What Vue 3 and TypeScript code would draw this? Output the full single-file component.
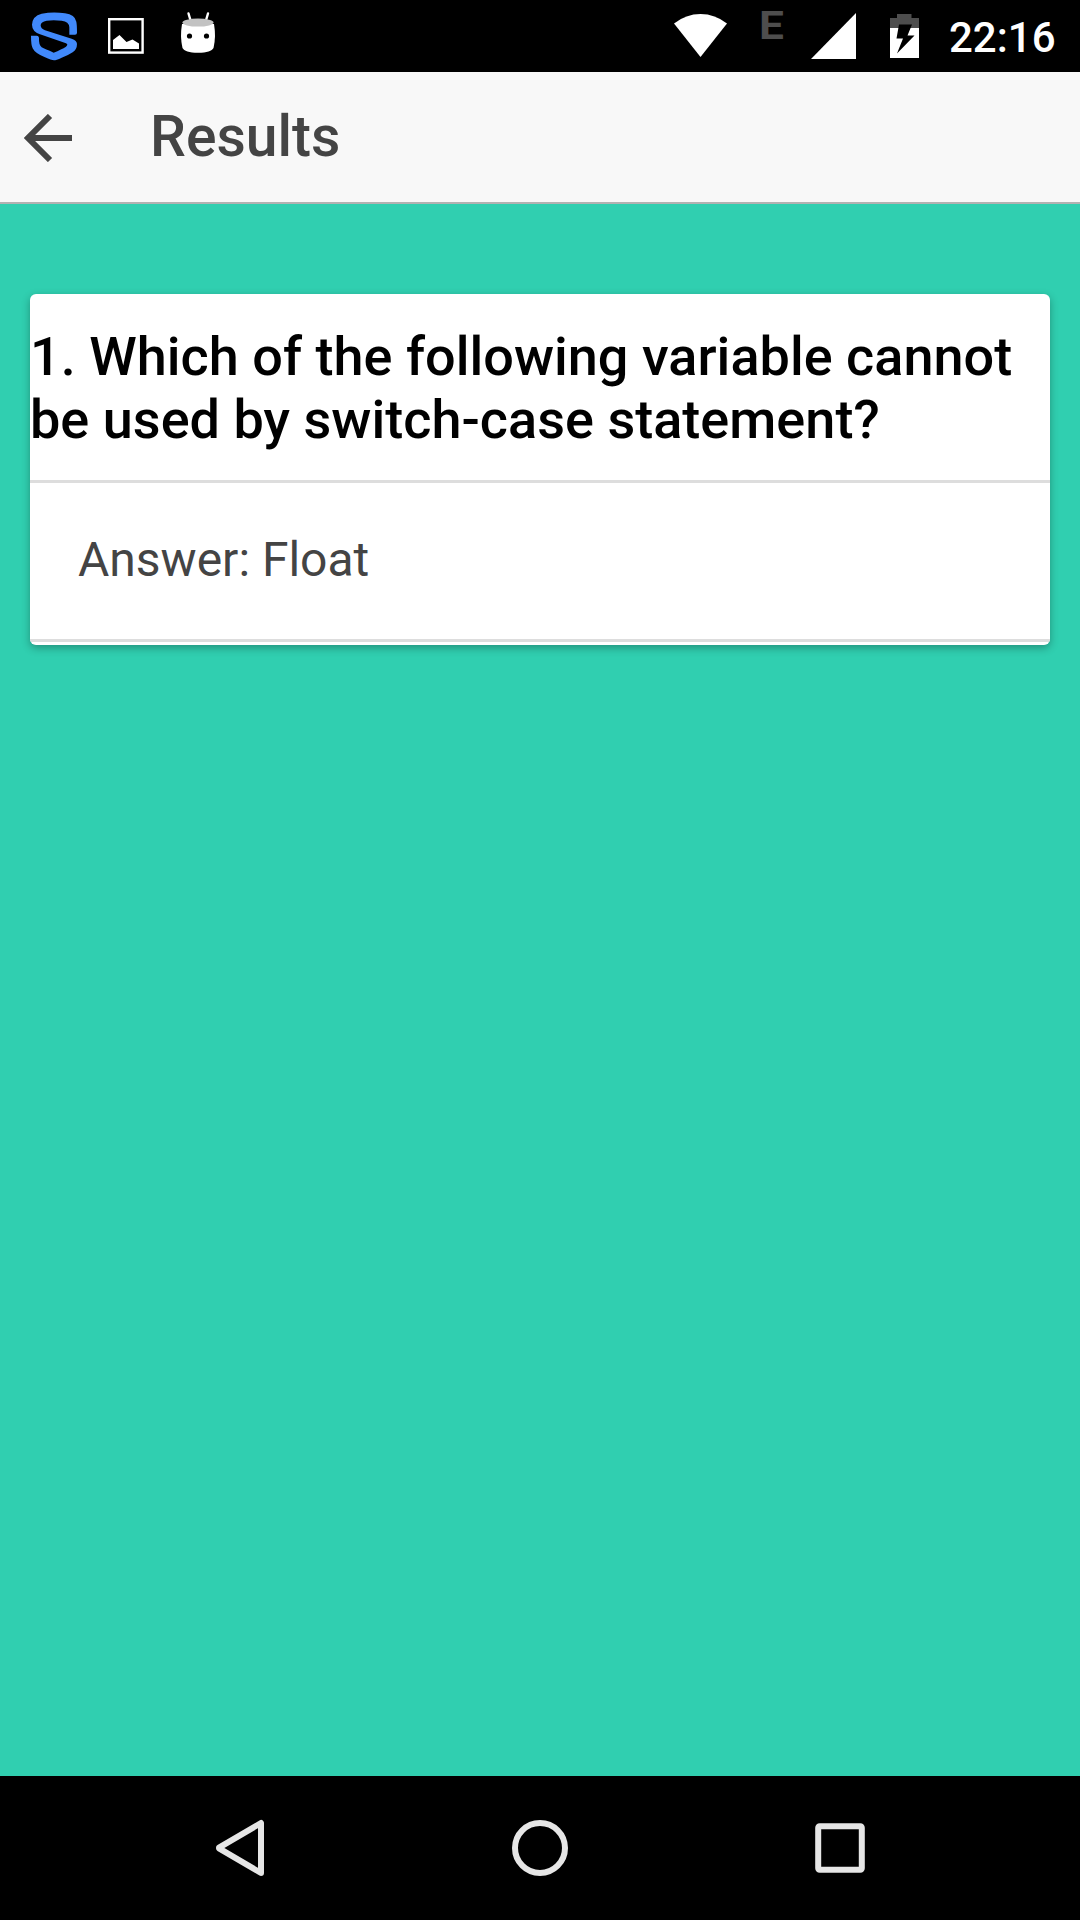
<script setup lang="ts">
interface Result {
  question: string
  answer: string
}

const title = 'Results'
const results: Result[] = [
  {
    question: 'Which of the following variable cannot be used by switch-case statement?',
    answer: 'Float',
  },
]
</script>

<template>
  <div class="screen">
    <div class="status">
      <div class="notifications">
        <svg class="shield" width="48" height="50" viewBox="30 33 144 150">
          <path
            fill="#4189fb"
            d="M148 104V82Q147 64 125 62Q100 59 80 62Q62 65 62 76Q62 86 75 91L155 116Q171 121 171 132Q171 148 158 157Q145 166 125 173Q108 181 102 181Q94 181 75 172Q45 160 38 145Q33 135 33 107H50Q57 107 57 115Q56 135 65 142Q75 147 101 158Q125 148 138 140Q146 134 138 130L60 103Q36 94 36 74Q37 48 65 41Q100 34 135 40Q165 44 169 65Q171 75 171 98Q171 104 165 104Z"
          />
        </svg>
        <svg class="photo" width="36" height="36" viewBox="0 0 36 36">
          <rect x="1.200" y="1.200" width="33.400" height="33.400" fill="none" stroke="#fff" stroke-width="2.400" />
          <path d="M5 31V22L11.500 17L18.500 24L24.500 21.500L31 25.500V31Z" fill="#fff" />
        </svg>
        <svg class="droid" width="36" height="42" viewBox="0 0 36 42">
          <path d="M8.500 1.500L11 10M28 1.500L25.500 10" stroke="#fff" stroke-width="2.400" stroke-linecap="round" />
          <path d="M2 12C0.600 20 0.600 28 2.500 36C4 39 9 40.800 18 40.800S32 39 33.500 36C35.400 28 35.400 20 34 12Z" fill="#fff" />
          <ellipse cx="18" cy="10.600" rx="15.600" ry="4" fill="#c2c2c2" />
          <circle cx="9.500" cy="24" r="2.600" fill="#000" />
          <circle cx="26.500" cy="24" r="2.600" fill="#000" />
        </svg>
      </div>
      <div class="system">
        <svg class="wifi" width="54" height="44" viewBox="0 0 54 44">
          <path d="M0 9.500Q12 0 26.500 0T53 9.500L26.500 43Z" fill="#fff" />
        </svg>
        <span class="network">E</span>
        <svg class="signal" width="45" height="46" viewBox="0 0 45 46">
          <path d="M45 0V46H0Z" fill="#fff" />
        </svg>
        <svg class="battery" width="29" height="44" viewBox="0 0 29 44">
          <path d="M7 0H21.500V4H29V14H0V4H7Z" fill="#4d4d4d" />
          <path d="M0 14H29V44H0Z" fill="#fff" />
          <path d="M9 10.500H22L17.500 21.500H24.500L7 39.500L13 24.500H6.500Z" fill="#000" />
        </svg>
        <span class="clock">22:16</span>
      </div>
    </div>

    <header class="bar">
      <svg class="back" width="48" height="48" viewBox="0 0 48 48" fill="none" stroke="#444" stroke-width="6">
        <path d="M48 24H4M26 2L4 24L26 46" />
      </svg>
      <h1 class="title">{{ title }}</h1>
    </header>

    <main class="content">
      <section v-for="(result, index) in results" :key="index" class="card">
        <h4 class="question">{{ index + 1 }}. {{ result.question }}</h4>
        <p class="answer">Answer: {{ result.answer }}</p>
      </section>
    </main>

    <nav class="nav">
      <svg width="56" height="60" viewBox="0 0 56 60" fill="none" stroke="#e6e6e6" stroke-width="6" stroke-linejoin="round">
        <path d="M49 5V55L7 30.300V29.700Z" />
      </svg>
      <svg width="56" height="56" viewBox="0 0 56 56" fill="none" stroke="#e6e6e6" stroke-width="6">
        <circle cx="28" cy="28" r="25" />
      </svg>
      <svg width="56" height="50" viewBox="0 0 56 50" fill="none" stroke="#e6e6e6" stroke-width="6">
        <rect x="6.200" y="3.200" width="43.600" height="43.600" rx="1.500" />
      </svg>
    </nav>
  </div>
</template>

<style>
body {
  margin: 0;
}
</style>

<style scoped>
.screen {
  display: flex;
  flex-direction: column;
  width: 1080px;
  height: 1920px;
  overflow: hidden;
  background: #30cfb0;
  font-family: Roboto, sans-serif;
}

svg {
  display: block;
  flex: none;
}

.status {
  display: flex;
  justify-content: space-between;
  height: 72px;
  background: #000;
}

.notifications,
.system {
  display: flex;
  align-items: flex-start;
}

.notifications {
  padding-left: 30px;
}

.shield {
  margin-top: 11px;
}

.photo {
  margin: 18px 0 0 30px;
}

.droid {
  margin: 12px 0 0 36px;
}

.system {
  padding-right: 24px;
}

.wifi {
  margin-top: 14px;
}

.network {
  width: 25px;
  margin: 3px 0 0 31px;
  color: #4d4d4d;
  font-size: 39.500px;
  font-weight: 700;
  line-height: 46px;
  transform: scaleX(1.12);
  transform-origin: 0 50%;
}

.signal {
  margin: 13px 0 0 27px;
}

.battery {
  margin: 14px 0 0 34px;
}

.clock {
  width: 107px;
  margin: 13px 0 0 30px;
  color: #fff;
  font-size: 42px;
  font-weight: 500;
  line-height: 50px;
  white-space: nowrap;
}

.bar {
  display: flex;
  align-items: center;
  box-sizing: border-box;
  height: 132px;
  padding: 0 24px;
  border-bottom: 2px solid #b2b2b2;
  background: #f8f8f8;
}

.back {
  margin-top: 2px;
}

.title {
  margin: 0 0 0 78px;
  color: #444;
  font-size: 57px;
  font-weight: 500;
  line-height: 130px;
}

.content {
  flex: 1;
  padding: 90px 30px 0;
}

.card {
  overflow: hidden;
  padding-bottom: 3px;
  border-radius: 6px;
  background: #fff;
  box-shadow: 0 3px 9px rgba(0, 0, 0, 0.3);
}

.question {
  margin: 0;
  padding: 31px 0 29px;
  color: #000;
  font-size: 54px;
  font-weight: 500;
  letter-spacing: 0.025px;
  line-height: 63px;
}

.answer {
  margin: 0;
  padding: 47px 48px 49px;
  border: solid #ddd;
  border-width: 3px 0;
  color: #444;
  font-size: 48px;
  line-height: 60px;
}

.nav {
  display: flex;
  align-items: center;
  justify-content: space-between;
  box-sizing: border-box;
  height: 144px;
  padding: 0 212px;
  background: #000;
}
</style>
